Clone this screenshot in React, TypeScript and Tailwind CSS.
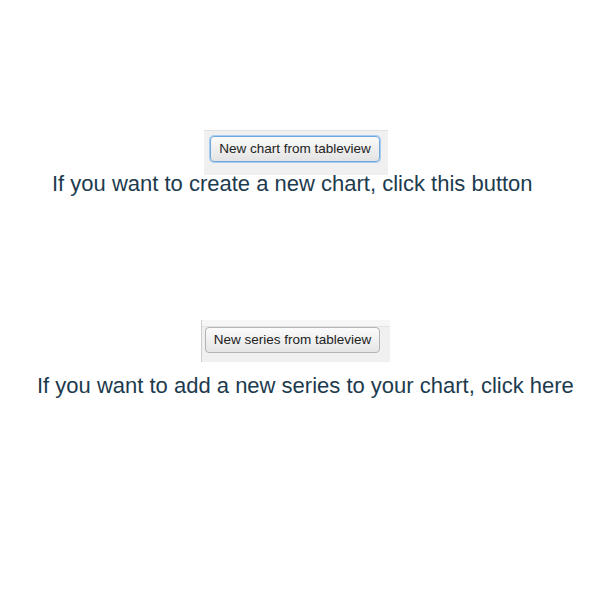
const App = () => {
  return (
    <div className="flex h-[600px] w-[600px] flex-col bg-white font-['Liberation_Sans',Arial,sans-serif]">
      <div className="mt-[130px] ml-[204px] h-[45px] w-[184px] border-t border-[#e2e2e2] bg-[#f0f0f0] pt-[5px] pl-[6px]">
        <button className="h-[26px] w-[170px] rounded-[4px] border border-[#6fa8dc] bg-gradient-to-b from-[#fbfbfb] to-[#e3e3e3] text-[13.5px] text-[#222] shadow-[0_0_0_1px_#a9cdef]">
          New chart from tableview
        </button>
      </div>
      <p className="-mt-[4px] ml-[52px] text-[22px] leading-[26px] text-[#1d3b4e]">
        If you want to create a new chart, click this button
      </p>
      <div className="mt-[123px] ml-[201px] h-[42px] w-[189px] border-l border-[#cfcfcf] bg-[#f0f0f0]">
        <div className="h-[7px] border-b border-[#e4e4e4] bg-[#f6f6f6]" />
        <button className="ml-[3px] h-[26px] w-[175px] rounded-[4px] border border-[#b4b4b4] bg-gradient-to-b from-[#fbfbfb] to-[#e6e6e6] text-[13.5px] text-[#222]">
          New series from tableview
        </button>
      </div>
      <p className="mt-[11px] ml-[37px] text-[22px] leading-[26px] text-[#1d3b4e]">
        If you want to add a new series to your chart, click here
      </p>
    </div>
  )
}

export default App
